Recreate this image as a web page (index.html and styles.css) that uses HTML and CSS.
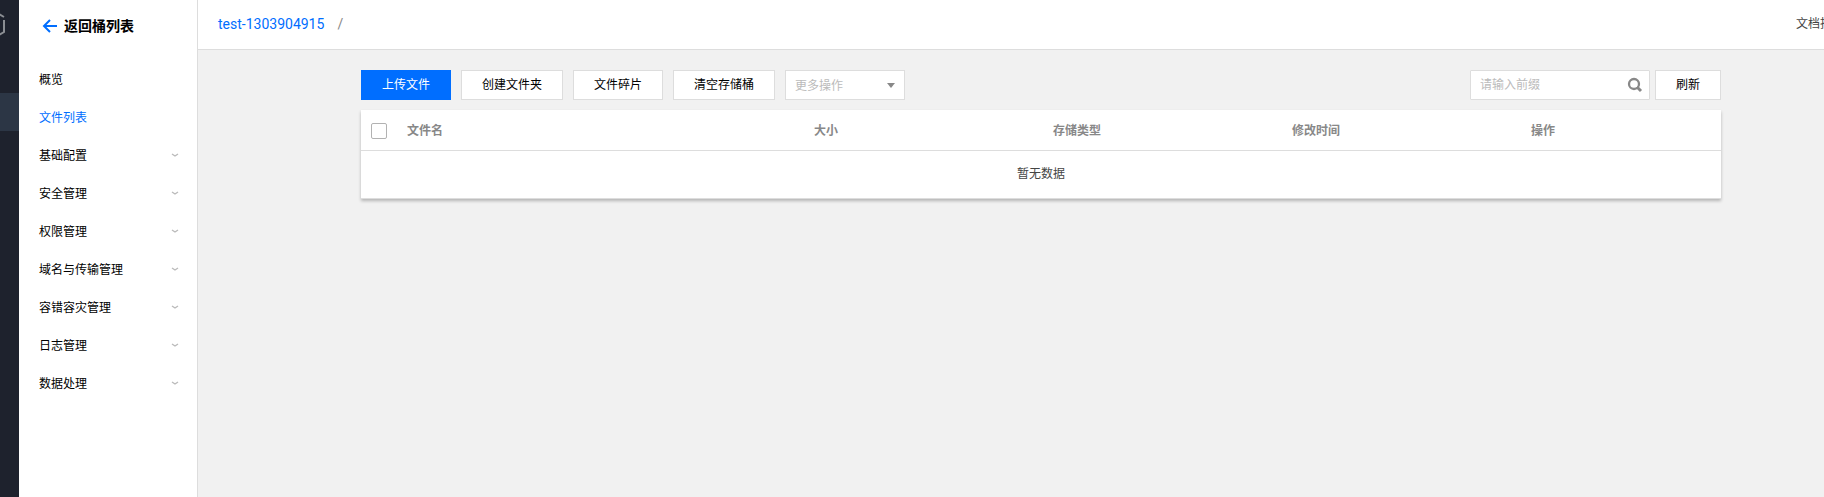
FILE: index.html
```html
<!DOCTYPE html>
<html lang="zh-CN">
<head>
<meta charset="utf-8">
<title>文件列表</title>
<link rel="stylesheet" href="styles.css">
</head>
<body>
<div class="app">
  <div class="rail">
    <svg class="rail-logo" width="19" height="26" viewBox="0 0 19 26" fill="none" stroke="#8b8e93" stroke-width="2"><path d="M-1 1L4 4M4 7V19L-1 22"/></svg>
    <div class="rail-active"></div>
  </div>
  <aside class="sidebar">
    <a class="back" href="#">
      <svg width="16" height="16" viewBox="0 0 16 16" fill="none" stroke="#006eff" stroke-width="2"><path d="M8 2L2 8L8 14M2 8H15"/></svg>
      <span>返回桶列表</span>
    </a>
    <nav class="menu">
      <a class="menu-item" href="#">概览</a>
      <a class="menu-item active" href="#">文件列表</a>
      <a class="menu-item" href="#">基础配置<svg class="chevron" viewBox="0 0 8 6"><path d="M1 1L4 3L7 1"/></svg></a>
      <a class="menu-item" href="#">安全管理<svg class="chevron" viewBox="0 0 8 6"><path d="M1 1L4 3L7 1"/></svg></a>
      <a class="menu-item" href="#">权限管理<svg class="chevron" viewBox="0 0 8 6"><path d="M1 1L4 3L7 1"/></svg></a>
      <a class="menu-item" href="#">域名与传输管理<svg class="chevron" viewBox="0 0 8 6"><path d="M1 1L4 3L7 1"/></svg></a>
      <a class="menu-item" href="#">容错容灾管理<svg class="chevron" viewBox="0 0 8 6"><path d="M1 1L4 3L7 1"/></svg></a>
      <a class="menu-item" href="#">日志管理<svg class="chevron" viewBox="0 0 8 6"><path d="M1 1L4 3L7 1"/></svg></a>
      <a class="menu-item" href="#">数据处理<svg class="chevron" viewBox="0 0 8 6"><path d="M1 1L4 3L7 1"/></svg></a>
    </nav>
  </aside>
  <div class="page">
    <header class="header">
      <div class="crumbs"><a class="crumb" href="#">test-1303904915</a><span>/</span></div>
      <a class="docs" href="#">文档指引</a>
    </header>
    <main class="content">
      <div class="toolbar">
        <button class="btn primary" type="button">上传文件</button>
        <button class="btn" type="button">创建文件夹</button>
        <button class="btn" type="button">文件碎片</button>
        <button class="btn" type="button">清空存储桶</button>
        <div class="select-box">
          <select class="select" aria-label="更多操作"><option>更多操作</option></select>
          <svg class="caret" width="8" height="5" viewBox="0 0 8 5"><path d="M0 0H8L4 5Z" fill="#888"/></svg>
        </div>
        <div class="tools-right">
          <div class="search">
            <input class="search-input" type="text" placeholder="请输入前缀" aria-label="请输入前缀">
            <button class="search-btn" type="button" aria-label="搜索">
              <svg width="16" height="16" viewBox="0 0 16 16" fill="none" stroke="#888"><circle cx="7" cy="7" r="5" stroke-width="2.3"/><path d="M10 10L14 14" stroke-width="3"/></svg>
            </button>
          </div>
          <button class="btn" type="button">刷新</button>
        </div>
      </div>
      <table class="table">
        <colgroup><col class="c-check"><col class="c-name"><col class="c-mid"><col class="c-mid"><col class="c-mid"><col></colgroup>
        <thead>
          <tr>
            <th><input class="check" type="checkbox" aria-label="全选"></th>
            <th>文件名</th><th>大小</th><th>存储类型</th><th>修改时间</th><th>操作</th>
          </tr>
        </thead>
        <tbody><tr><td class="empty" colspan="6">暂无数据</td></tr></tbody>
      </table>
    </main>
  </div>
</div>
</body>
</html>
```
FILE: styles.css
```css
* { box-sizing: border-box; }
body {
  margin: 0;
  overflow: hidden;
  background: #f1f1f1;
  color: #000;
  font: 12px/18px Roboto, "Noto Sans CJK SC", sans-serif;
}
a { color: inherit; text-decoration: none; }
button, input, select { font: inherit; }
.app { display: flex; min-height: 100vh; }
.rail { flex: none; width: 19px; background: #1e222d; padding-top: 13px; }
.rail-logo { display: block; }
.rail-active { height: 38px; margin-top: 54px; background: #2c3645; }
.sidebar {
  flex: none;
  width: 179px;
  background: #fff;
  border-right: 1px solid #ddd;
}
.back {
  display: flex;
  align-items: center;
  gap: 6px;
  height: 52px;
  padding-left: 23px;
  font-size: 14px;
  font-weight: 700;
}
.menu { padding-top: 9px; }
.menu-item {
  display: flex;
  align-items: center;
  justify-content: space-between;
  height: 38px;
  padding: 0 18px 0 20px;
}
.active { color: #006eff; }
.chevron { width: 8px; height: 6px; fill: none; stroke: #bbb; stroke-width: 1.4; }
.page { flex: 1; min-width: 0; }
.header {
  display: flex;
  justify-content: space-between;
  height: 50px;
  padding: 15px 0 0 20px;
  background: #fff;
  border-bottom: 1px solid #ddd;
}
.crumbs { display: flex; gap: 13px; color: #888; font-size: 14px; }
.crumb { color: #006eff; }
.docs { width: 28px; color: #444; white-space: nowrap; }
.content { padding: 20px 103px 0 163px; }
.toolbar { display: flex; gap: 10px; margin-bottom: 10px; }
.btn {
  height: 30px;
  padding: 0 20px;
  border: 1px solid #ddd;
  background: #fff;
  color: #000;
}
.primary { border-color: #006eff; background: #006eff; color: #fff; }
.select-box { position: relative; width: 120px; }
.select {
  appearance: none;
  width: 100%;
  height: 30px;
  padding: 1px 9px 0;
  border: 1px solid #ddd;
  border-radius: 0;
  background: #fff;
  color: #bbb;
}
.caret { position: absolute; top: 13px; right: 10px; pointer-events: none; }
.tools-right { display: flex; gap: 5px; margin-left: auto; }
.search {
  display: flex;
  align-items: center;
  width: 180px;
  height: 30px;
  padding: 0 6px 0 9px;
  border: 1px solid #ddd;
  border-radius: 1px;
  background: #fff;
}
.search-input {
  flex: 1;
  min-width: 0;
  padding: 0;
  border: 0;
  outline: 0;
  background: none;
}
.search-input::placeholder { color: #bbb; opacity: 1; }
.search-btn { display: flex; padding: 0; border: 0; background: none; }
.table {
  width: 100%;
  table-layout: fixed;
  border-spacing: 0;
  background: #fff;
  box-shadow: 0 2px 3px rgba(0, 0, 0, 0.25);
}
.c-check { width: 36px; }
.c-name { width: 407px; }
.c-mid { width: 239px; }
.table th {
  height: 41px;
  padding: 1px 10px 0;
  border-bottom: 1px solid #ddd;
  color: #888;
  font-weight: 700;
  text-align: left;
}
.check {
  appearance: none;
  display: block;
  width: 16px;
  height: 16px;
  margin: 0;
  border: 1px solid #b2b2b2;
  border-radius: 2px;
  background: #fff;
}
.empty { height: 48px; padding: 0 0 2px; border-bottom: 1px solid #ddd; color: #444; text-align: center; }
```
